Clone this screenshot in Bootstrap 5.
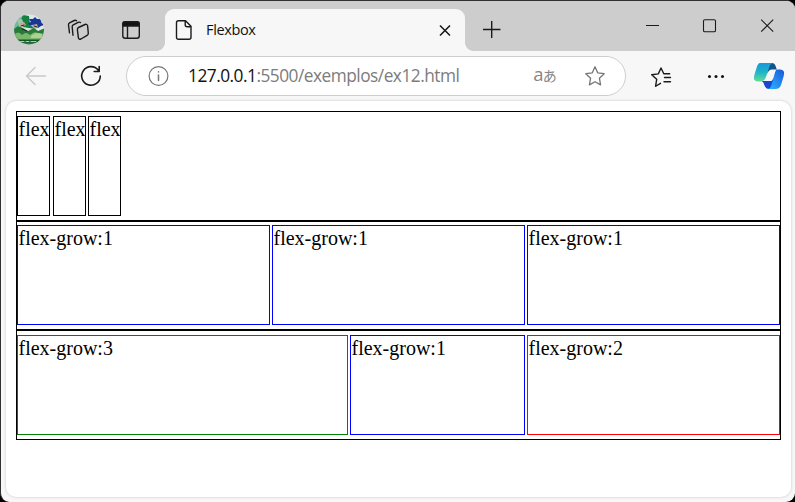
<!DOCTYPE html>
<html lang="pt-br">
<head>
<meta charset="utf-8">
<title>Flexbox</title>
<link href="https://cdn.jsdelivr.net/npm/bootstrap@5.3.0/dist/css/bootstrap.min.css" rel="stylesheet">
<script src="https://cdn.jsdelivr.net/npm/bootstrap@5.3.0/dist/js/bootstrap.bundle.min.js" defer></script>
<style>
  body { background: #000; width: 795px; height: 502px; font-family: "Open Sans", "Noto Sans CJK JP", sans-serif; color: #111; }
  svg { display: block; flex: none; fill: none; stroke: #1b1b1b; stroke-width: 1.4; stroke-linecap: round; stroke-linejoin: round; }
  .browser { width: 795px; height: 502px; background: #f7f7f7; border: solid #332f33; border-width: 1px 0 0 1px; border-radius: 9px; }
  .tabstrip { height: 50px; background: #cdcdcd; }
  .strip-icons { margin-top: 13px; }
  .tab { width: 300px; height: 42px; background: #f7f7f7; border-radius: 9px 9px 0 0; margin-left: 24px; padding: 0 13px 0 10px; }
  .tab::before, .tab::after { content: ""; position: absolute; bottom: 0; width: 8px; height: 8px; }
  .tab::before { left: -8px; background: radial-gradient(circle at 0 0, transparent 7.5px, #f7f7f7 8px); }
  .tab::after { right: -8px; background: radial-gradient(circle at 100% 0, transparent 7.5px, #f7f7f7 8px); }
  .tab-title { font-size: 14.5px; line-height: 20px; letter-spacing: -.35px; margin-left: 13px; padding-bottom: 1px; }
  .toolbar { height: 50px; }
  .address { width: 500px; height: 40px; border: 1px solid #cdcdcd; border-radius: 20px; background: #fff; margin-left: 23px; padding: 0 19px 0 20px; }
  .url { font-size: 17.3px; line-height: 24px; letter-spacing: -.5px; margin-left: 19px; color: #7c7c7c; }
  .url span { color: #111; }
  .translate { font-size: 18.5px; line-height: 22px; color: #858585; letter-spacing: -.8px; padding-bottom: 2px; }
  .translate small { font-size: 14px; }
  .fav { margin-left: 28px; }
  .viewport { width: 785px; height: 396px; margin-left: 5px; border-radius: 10px; background: #fff; box-shadow: 0 0 3px rgba(0,0,0,.2); padding: 10px; font: 20px/24px "Liberation Serif", serif; color: #000; }
  .demo { width: 765px; height: 110px; border: 1px solid #000; padding-top: 4px; gap: 2px; }
  .demo-mid { height: 109px; padding-top: 3px; }
  .demo > div { height: 100px; border: 1px solid #000; padding-left: .5px; white-space: nowrap; }
  .demo > .blue { border-color: #00f; }
  .demo > .green { border-color: #008000; }
  .demo > .red { border-color: #f00; }
  .w-item { width: 33px; }
  .w-item.wide-gap { margin-left: 1px; }
  .w-third { width: 253px; }
  .w-large { width: 331px; }
  .w-small { width: 175px; }
</style>
</head>
<body class="overflow-hidden">
<div class="browser overflow-hidden">
  <div class="tabstrip d-flex">
    <svg class="strip-icons" width="140" height="32" viewBox="1 14 140 32">
      <defs><clipPath id="face"><circle cx="29" cy="29.500" r="15"/></clipPath></defs>
      <g clip-path="url(#face)" stroke="none">
        <path fill="#dfe8e4" d="M14 14h31v31H14z"/>
        <path fill="#75b99b" d="M14 14h11l-2 10-9 5z"/>
        <path fill="#178044" d="M23 15l6 1 1 8 5 5-12-2-3-5z"/>
        <path fill="#a5c5ae" d="M17 20l5-1 2 5-4 3z"/>
        <path fill="#18379a" d="M28 23l3-1-2-3 4 0 2-2 2 2 5 0-1 3 3 3-3 1-3 2-5-3-4 0z"/>
        <path fill="#c9a68d" d="M20 23l4-1 2 3-4 2zM32 25l5-1 1 3-3 2z"/>
        <path fill="#287a3b" d="M14 29l4-3 5 2 5 3 6-3 4 3 7-3v17H14z"/>
        <path fill="#7cb56c" d="M14 35q4-5 8 0 4-4 8 0 5-5 9-1l6-1v8H14z"/>
        <path fill="#b0d192" d="M31 36q5-5 11-2v4H31z"/>
        <path fill="#13552b" d="M16 39.500h26v3H16z"/>
        <path stroke="#d8edcf" stroke-width=".8" d="M20 41.500h4m2 0h3m2 0h5"/>
        <path stroke="#222" stroke-width="1" d="M21 26l3-1m10 1l3 1M22 29l5 2"/>
      </g>
      <path d="M69.500 32.800l-1-7.800q-.2-1.500 1-2.200l4.800-2.300q1.300-.5 2.200.2M73 35.200l-.8-8.200q-.2-1.500 1-2.200l5-2.500q1.300-.5 2.200.2M78.500 27.500l6.500-3q2.200-.7 2.600 1.400l.7 7.200q.1 1.500-1.200 2.200l-6.200 3.700q-2 .8-2.500-1.200l-1-8q-.1-1.700 1.100-2.300z"/>
      <rect x="122.800" y="21.800" width="16.500" height="16.500" rx="2.500"/><path d="M127.500 26v12"/><path fill="#111" d="M122.800 26v-1.500q0-2.700 2.700-2.700h11q2.800 0 2.800 2.700V26z"/>
    </svg>
    <div class="tab position-relative mt-2 d-flex align-items-center">
      <svg width="18" height="22" viewBox="0 0 18 22"><path d="M3.500 1.700h7l5.500 5.600v10.900q0 2-2 2H3.500q-2 0-2-2V3.700q0-2 2-2zM10.200 2v3.700q0 2 2 2h3.600"/></svg>
      <div class="tab-title">Flexbox</div>
      <svg class="ms-auto" width="14" height="14" viewBox="0 0 14 14"><path stroke-width="1.600" stroke-linecap="butt" d="M2 2.500l10 10M12 2.500l-10 10"/></svg>
    </div>
    <svg class="strip-icons ms-auto" width="330" height="32" viewBox="465 14 330 32"><path stroke-linecap="butt" d="M483 29.500h17.500M491.700 21v17"/><path stroke-width="1.100" stroke-linecap="butt" d="M646 25.500h13M761.200 19.700l12 12M773.200 19.700l-12 12"/><rect x="703.500" y="19.700" width="12" height="12" rx="1.300" stroke-width="1.100"/></svg>
  </div>
  <div class="toolbar d-flex align-items-center">
    <svg width="102" height="50" viewBox="1 51 102 50"><path stroke="#c9c9c9" d="M45.500 76H27M35 67.500L26.500 76l8.500 8.500"/><path stroke-width="1.600" d="M98.300 70.200a9.300 9.300 0 1 0 2 5.800M99.200 66.500v5h-5"/></svg>
    <div class="address d-flex align-items-center">
      <svg width="22" height="22" viewBox="0 0 22 22"><circle cx="11.500" cy="11" r="9.400" stroke="#777" stroke-width="1.200"/><path stroke="#777" d="M11.500 10v5.500M11.500 6.700v.2" stroke-width="1.500"/></svg>
      <div class="url"><span>127.0.0.1</span>:5500/exemplos/ex12.html</div>
      <div class="translate ms-auto">a<small>あ</small></div>
      <svg class="fav" width="22" height="22" viewBox="0 0 22 22"><path stroke="#777" stroke-width="1.300" d="M11 1.800l2.700 6 6.500.9-4.800 4.500 1.200 6.700-5.600-3.200-5.600 3.200L6.600 13.200 1.800 8.700l6.500-.9z"/></svg>
    </div>
    <svg width="169" height="50" viewBox="626 51 169 50">
      <defs>
        <linearGradient id="cyan" x1="0" y1="0" x2="0" y2="1"><stop stop-color="#1799d6"/><stop offset=".5" stop-color="#20b4ca"/><stop offset="1" stop-color="#64dc94"/></linearGradient>
        <linearGradient id="azure" x1="1" y1="0" x2="0" y2="1"><stop stop-color="#1756d5"/><stop offset=".5" stop-color="#2488ef"/><stop offset="1" stop-color="#28b8f6"/></linearGradient>
      </defs>
      <path d="M656.500 85.900l-.9.300 1.100-6.900-5-4.500 6.600-.9 2.700-5.900 2.800 5.700h5.900M664.500 77.500h6M664 81.700h6.500M656 86l4.500-2.700"/>
      <g fill="#111" stroke="none"><circle cx="709.500" cy="76.500" r="1.500"/><circle cx="716" cy="76.500" r="1.500"/><circle cx="722.500" cy="76.500" r="1.500"/></g>
      <g stroke="none">
        <path fill="#10548d" d="M766 63h6q2.600 0 3.600 3l1.200 3.500h-5q-3 0-4.300 4z"/>
        <path fill="#1947d2" d="M761.500 81h10l3-4-1 5q-1.500 7-4.500 7t-4.500-3.500q-1-4-3-4.500z"/>
        <path fill="url(#cyan)" d="M760 63h13q-2.700.4-3.700 4l-3.500 10.500q-1.300 4-5 4h-2.500q-6 0-3.800-7l2-6.500q1.500-5 3.500-5z"/>
        <path fill="url(#azure)" d="M777 69.500h3q5.600 0 3.700 6.500l-2.500 8.500q-1.400 4.500-6 4.500h-7q2.200-.4 3.300-4l2.900-10.500q1.300-5 2.600-5z"/>
      </g>
    </svg>
  </div>
  <div class="viewport">
    <div class="demo d-flex">
      <div class="w-item">flex</div><div class="w-item wide-gap">flex</div><div class="w-item">flex</div>
    </div>
    <div class="demo demo-mid d-flex">
      <div class="blue w-third">flex-grow:1</div><div class="blue w-third">flex-grow:1</div><div class="blue w-third">flex-grow:1</div>
    </div>
    <div class="demo d-flex">
      <div class="green w-large">flex-grow:3</div><div class="blue w-small">flex-grow:1</div><div class="red w-third">flex-grow:2</div>
    </div>
  </div>
</div>
</body>
</html>
